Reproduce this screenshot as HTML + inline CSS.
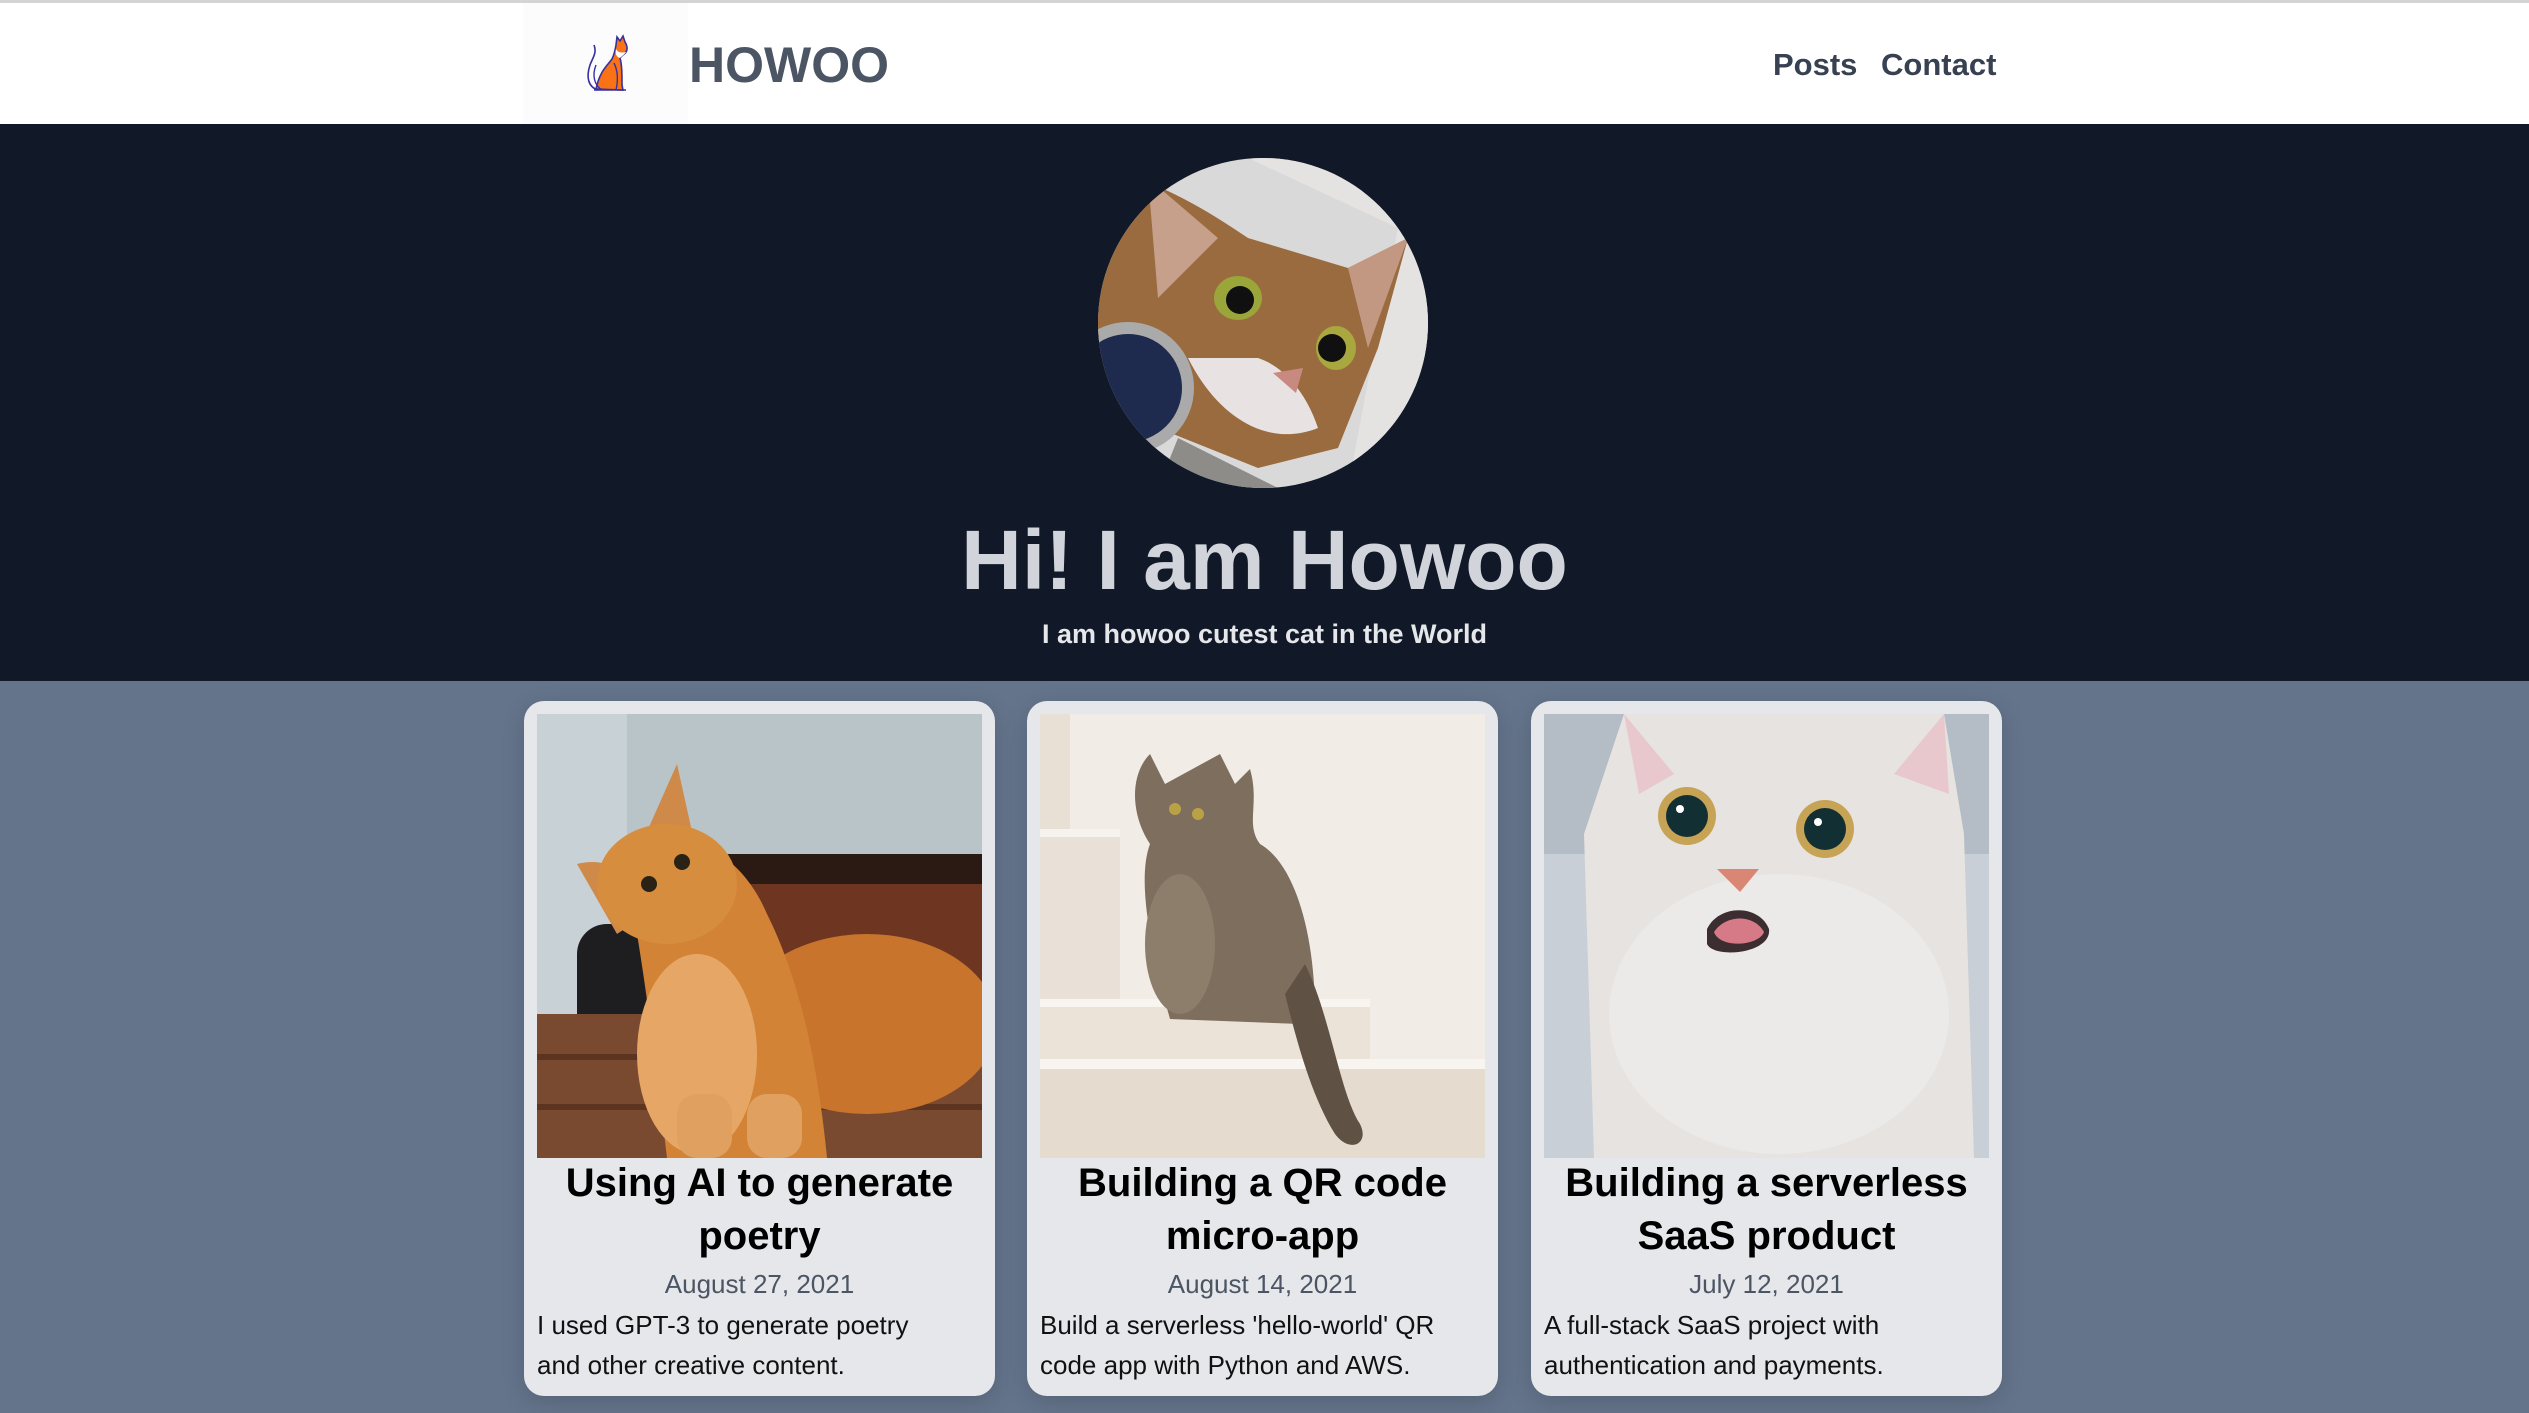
<!DOCTYPE html>
<html><head><meta charset="utf-8"><style>
*{margin:0;padding:0;box-sizing:border-box}
body{width:2529px;height:1413px;overflow:hidden;background:#64748b;font-family:"Liberation Sans",sans-serif;position:relative}
.hdr{position:absolute;left:0;top:0;width:2529px;height:124px;background:#fff;border-top:3px solid #d4d4d4}
.logo{position:absolute;left:523px;top:0;width:165px;height:121px;background:#fcfcfd}
.brand{position:absolute;left:689px;top:33px;font-size:50px;font-weight:bold;color:#4b5563;letter-spacing:0px}
.nav{position:absolute;top:44px;font-size:31px;font-weight:bold;color:#374151}
.hero{position:absolute;left:0;top:124px;width:2529px;height:557px;background:#111827}
.av{position:absolute;left:1098px;top:158px;width:330px;height:330px;border-radius:50%;overflow:hidden}
.h1{position:absolute;left:0;width:2529px;text-align:center;top:512px;font-size:84px;font-weight:bold;color:#d1d5db}
.sub{position:absolute;left:0;width:2529px;text-align:center;top:619px;font-size:27px;font-weight:bold;color:#e5e7eb}
.card{position:absolute;top:701px;width:471px;height:695px;background:#e5e7eb;border-radius:20px;box-shadow:0 6px 24px rgba(0,0,0,.15)}
.img{position:absolute;left:13px;top:13px;width:445px;height:444px;overflow:hidden}
.t{position:absolute;left:0;width:471px;top:456px;text-align:center;font-size:40px;font-weight:bold;line-height:53px;color:#000;padding:0 8px}
.d{position:absolute;left:0;width:471px;top:568px;text-align:center;font-size:26px;color:#4b5563}
.p{position:absolute;left:13px;width:420px;top:604px;font-size:26px;line-height:40px;color:#111}
</style></head><body>
<div class="hdr">
<div class="logo"><svg width="80" height="80" viewBox="0 0 80 80" style="position:absolute;left:37px;top:22px">
<path d="M36 64 C40 45 48 40 52 34 C54 30 55 26 56 20 L57 12 L60 16 L63 11 L65 17 C67 20 68 24 66 27 C64 30 62 30 60 33 C62 40 62 50 62 60 L63 65 Z" fill="#f97316" stroke="#3730a3" stroke-width="1.6"/>
<path d="M60 33 C56 32 55 28 56 24 C58 28 62 28 66 27 C64 30 62 31 60 33Z" fill="#fff"/>
<path d="M38 65 C28 62 26 52 30 40 C33 32 37 28 34 20" fill="none" stroke="#3730a3" stroke-width="1.6"/>
<path d="M42 65 C34 60 32 50 36 40" fill="none" stroke="#3730a3" stroke-width="1.4"/>
<path d="M54 38 C58 46 58 56 56 65" fill="none" stroke="#3730a3" stroke-width="1.4"/>
<path d="M34 65 L66 65" stroke="#3730a3" stroke-width="1.6"/>
</svg></div>
<div class="brand">HOWOO</div>
<div class="nav" style="left:1773px">Posts</div>
<div class="nav" style="left:1881px">Contact</div>
</div>
<div class="hero">
</div>
<div class="av"><svg width="330" height="330" viewBox="0 0 330 330">
<rect width="330" height="330" fill="#d9d9d9"/>
<path d="M150 0 L330 0 L330 330 L250 330 L280 170 L300 70Z" fill="#e4e3e1"/>
<path d="M0 90 L40 20 C90 40 120 60 150 80 L250 110 L310 80 L280 190 L240 290 L160 310 L60 270 L0 200Z" fill="#9a6b3e"/>
<path d="M50 20 L120 80 L60 140Z" fill="#c6a08a"/>
<path d="M310 80 L250 110 L270 190Z" fill="#c29882"/>
<path d="M90 200 C120 260 170 290 220 270 C210 240 190 210 160 200Z" fill="#e8e2e2"/>
<ellipse cx="140" cy="140" rx="24" ry="22" fill="#9aa53a"/><circle cx="142" cy="142" r="14" fill="#101010"/>
<ellipse cx="238" cy="190" rx="20" ry="22" fill="#a8a83e"/><circle cx="234" cy="190" r="14" fill="#101010"/>
<path d="M175 215 L205 210 L198 235Z" fill="#c88a80"/>
<circle cx="30" cy="230" r="60" fill="#1e2a4e" stroke="#aaa" stroke-width="12"/>
<path d="M80 280 L180 330 L60 330Z" fill="#8d8c88"/>
</svg></div>
<div class="h1">Hi! I am Howoo</div>
<div class="sub">I am howoo cutest cat in the World</div>

<div class="card" style="left:524px">
<div class="img"><svg width="445" height="444" viewBox="0 0 445 444">
<rect width="445" height="444" fill="#b9c4c8"/>
<rect x="0" y="0" width="90" height="444" fill="#c8d2d6"/>
<rect x="120" y="150" width="325" height="230" fill="#6e3620"/>
<rect x="130" y="140" width="315" height="30" fill="#2b1a14"/>
<rect x="40" y="210" width="80" height="150" rx="30" fill="#1e1e20"/>
<rect x="0" y="300" width="445" height="144" fill="#7a4a30"/>
<rect x="0" y="340" width="445" height="6" fill="#5c3420"/><rect x="0" y="390" width="445" height="6" fill="#5c3420"/>
<ellipse cx="330" cy="310" rx="130" ry="90" fill="#c8742c"/>
<path d="M90 140 C140 110 200 130 230 200 C260 260 280 340 290 444 L130 444 C120 360 110 280 100 220Z" fill="#d28336"/>
<path d="M140 50 L160 140 L100 140Z" fill="#cf8a4a"/>
<path d="M40 150 C80 140 100 170 110 200 L80 220Z" fill="#cf8a4a"/>
<ellipse cx="130" cy="170" rx="70" ry="60" fill="#d78d3e"/>
<ellipse cx="160" cy="340" rx="60" ry="100" fill="#e6a766"/>
<circle cx="112" cy="170" r="8" fill="#2b2216"/><circle cx="145" cy="148" r="8" fill="#2b2216"/>
<rect x="140" y="380" width="55" height="64" rx="20" fill="#e0a060"/><rect x="210" y="380" width="55" height="64" rx="20" fill="#e0a060"/>
</svg></div>
<div class="t">Using AI to generate poetry</div>
<div class="d">August 27, 2021</div>
<div class="p">I used GPT-3 to generate poetry and other creative content.</div>
</div>

<div class="card" style="left:1027px">
<div class="img"><svg width="445" height="444" viewBox="0 0 445 444">
<rect width="445" height="444" fill="#f1ece6"/>
<rect x="0" y="0" width="30" height="120" fill="#e8dfd5"/>
<rect x="0" y="120" width="80" height="170" fill="#e9e1d7"/><rect x="0" y="115" width="80" height="8" fill="#f6f2ee"/>
<rect x="0" y="290" width="330" height="60" fill="#ebe2d8"/><rect x="0" y="285" width="330" height="8" fill="#f8f5f1"/>
<rect x="0" y="350" width="445" height="94" fill="#e6dbcf"/><rect x="0" y="345" width="445" height="10" fill="#f8f4ef"/>
<path d="M180 40 L195 70 L210 55 C220 90 205 110 220 130 C255 150 275 220 275 300 L260 310 L130 305 C115 250 95 170 110 130 C90 100 90 60 110 40 L125 70Z" fill="#7e6e5e"/>
<path d="M265 250 C290 300 300 380 320 410 C330 430 310 440 295 420 C270 380 255 320 245 280Z" fill="#5f5245"/>
<circle cx="135" cy="95" r="6" fill="#b9a246"/><circle cx="158" cy="100" r="6" fill="#b9a246"/>
<ellipse cx="140" cy="230" rx="35" ry="70" fill="#8d7d6b"/>
</svg></div>
<div class="t">Building a QR code micro-app</div>
<div class="d">August 14, 2021</div>
<div class="p">Build a serverless 'hello-world' QR code app with Python and AWS.</div>
</div>

<div class="card" style="left:1531px">
<div class="img"><svg width="445" height="444" viewBox="0 0 445 444">
<rect width="445" height="444" fill="#b4bcc6"/>
<rect x="0" y="140" width="445" height="304" fill="#c9cfd6"/>
<path d="M80 0 L400 0 L420 120 L430 444 L50 444 L40 120Z" fill="#e6e3e1"/>
<path d="M80 0 L130 60 L95 80Z" fill="#e8c8cc"/><path d="M400 0 L350 60 L405 80Z" fill="#e8c8cc"/>
<ellipse cx="235" cy="300" rx="170" ry="140" fill="#eceae8"/>
<circle cx="143" cy="102" r="29" fill="#c7a356"/><circle cx="143" cy="102" r="21" fill="#123033"/><circle cx="136" cy="95" r="4" fill="#fff"/>
<circle cx="281" cy="115" r="29" fill="#c7a356"/><circle cx="281" cy="115" r="21" fill="#123033"/><circle cx="274" cy="108" r="4" fill="#fff"/>
<path d="M173 155 L215 155 L196 178Z" fill="#d98774"/>
<path d="M163 215 C175 190 215 190 225 215 C228 240 170 245 163 230Z" fill="#3c2e30"/>
<path d="M170 218 C182 200 210 200 220 218 C215 232 176 235 170 218Z" fill="#d67a88"/>
</svg></div>
<div class="t">Building a serverless SaaS product</div>
<div class="d">July 12, 2021</div>
<div class="p">A full-stack SaaS project with authentication and payments.</div>
</div>
</body></html>
